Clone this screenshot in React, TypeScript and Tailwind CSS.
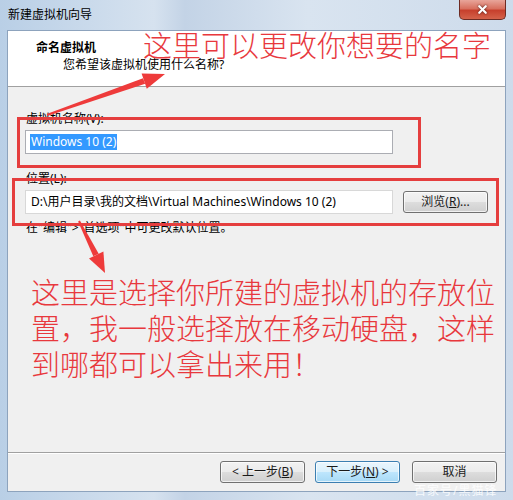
import { X } from "lucide-react";

const ui = "font-['Noto_Sans','Noto_Sans_CJK_SC',sans-serif]";

const WinButton = ({
  children,
  focused = false,
  className = "",
}: {
  children: React.ReactNode;
  focused?: boolean;
  className?: string;
}) => (
  <div
    className={`w-[85px] h-[22px] rounded-[3px] border flex items-center justify-center text-[12px] leading-none text-[#1a1a1a] shadow-[inset_0_0_0_1px_rgba(255,255,255,0.7)] ${
      focused
        ? "border-[#3c7fb1] bg-[linear-gradient(#eaf6fd_0%,#d9f0fc_50%,#bee6fd_51%,#a7d9f5_100%)]"
        : "border-[#707070] bg-[linear-gradient(#f2f2f2_0%,#ebebeb_50%,#dddddd_51%,#cfcfcf_100%)]"
    } ${className}`}
  >
    {children}
  </div>
);

export default function App() {
  return (
    <div
      className={`relative w-[513px] h-[500px] overflow-hidden flex flex-col bg-[linear-gradient(90deg,#b9cfe6_0%,#d6e2ef_30%,#c3d3e6_36%,#d9e4f0_60%,#cddbeb_100%)] ${ui}`}
    >
      {/* title bar */}
      <div className="h-[30px] flex items-start justify-between pl-[8px]">
        <span className="text-[12px] leading-none mt-[9px] text-black">
          新建虚拟机向导
        </span>
        <div className="w-[47px] h-[20px] mr-[7px] rounded-b-[5px] border border-t-0 border-[#6d2b23] bg-[linear-gradient(#e8a59a_0%,#d8705f_45%,#c7402d_55%,#d4624a_100%)] flex items-center justify-center">
          <X className="w-[13px] h-[13px] text-white drop-shadow-[0_0_1px_#4a1a14]" strokeWidth={4} />
        </div>
      </div>

      {/* client area */}
      <div className="flex-1 mx-[7px] mb-[8px] flex flex-col border border-[#8da3bd] bg-[#f0f0f0]">
        {/* header */}
        <div className="h-[56px] bg-white border-b border-[#a0a0a0] pl-[28px] pt-[9px] text-black">
          <div className="text-[12px] font-bold leading-[16px]">命名虚拟机</div>
          <div className="text-[12px] leading-[16px] ml-[27px] mt-[1px]">
            您希望该虚拟机使用什么名称?
          </div>
        </div>

        {/* body */}
        <div className="flex-1 flex flex-col pl-[17px] pt-[25px] text-[12px] text-black">
          <div className="leading-[14px] ml-[1px]">虚拟机名称(V):</div>
          <div className="mt-[4px] w-[368px] h-[24px] bg-white border border-[#abadb3] flex items-center pl-[4px]">
            <span className="bg-[#3399ff] text-white leading-[16px] px-[1px]">
              Windows 10 (2)
            </span>
          </div>

          <div className="leading-[14px] ml-[1px] mt-[18px]">位置(L):</div>
          <div className="mt-[4px] flex items-center gap-[10px]">
            <div className="w-[368px] h-[24px] bg-white border border-[#d8d8d8] flex items-center pl-[5px] leading-none">
              D:\用户目录\我的文档\Virtual Machines\Windows 10 (2)
            </div>
            <WinButton>
              浏览(<span className="underline">R</span>)...
            </WinButton>
          </div>
          <div className="leading-[14px] ml-[1px] mt-[7px]">
            {'在"编辑">"首选项"中可更改默认位置。'}
          </div>

          <div className="mt-[38px] ml-[6px] w-[470px] text-[29px] leading-[36px] text-[#e8383d] font-['Noto_Sans_CJK_SC',sans-serif] font-light">
            这里是选择你所建的虚拟机的存放位置，我一般选择放在移动硬盘，这样到哪都可以拿出来用！
          </div>
        </div>

        {/* footer */}
        <div className="h-[39px] border-t border-[#a0a0a0] shadow-[inset_0_1px_0_#fff] flex items-start justify-end gap-[10px] pt-[8px] pr-[8px]">
          <WinButton>
            &lt; 上一步(<span className="underline">B</span>)
          </WinButton>
          <WinButton focused>
            下一步(<span className="underline">N</span>) &gt;
          </WinButton>
          <WinButton className="ml-[2px]">取消</WinButton>
        </div>
      </div>

      {/* annotations */}
      <div className="absolute left-[143px] top-[26px] text-[29px] leading-[36px] text-[#e8383d] font-['Noto_Sans_CJK_SC',sans-serif] font-light whitespace-nowrap">
        这里可以更改你想要的名字
      </div>
      <div className="absolute left-[17px] top-[117px] w-[404px] h-[51px] border-[3px] border-[#e53e3e]" />
      <div className="absolute left-[12px] top-[178px] w-[487px] h-[48px] border-[3px] border-[#e53e3e]" />
      <svg className="absolute inset-0 pointer-events-none" width="513" height="500">
        <polygon
          points="46.7,114.1 143,78.2 145.2,83.8 47.3,115.9"
          fill="#ee3b3b"
        />
        <polygon points="165,74 146.8,88.8 141.6,73.6" fill="#ee3b3b" />
        <polygon
          points="79.9,220.6 98.7,253.7 93.3,256.3 78.1,221.4"
          fill="#ee3b3b"
        />
        <polygon points="105,273 103.4,251.5 89,258.5" fill="#ee3b3b" />
      </svg>
      <div className="absolute left-[414px] top-[485px] text-[12px] leading-none text-white/80 whitespace-nowrap tracking-[1px]">
        百家号/黑猫锋
      </div>
    </div>
  );
}
